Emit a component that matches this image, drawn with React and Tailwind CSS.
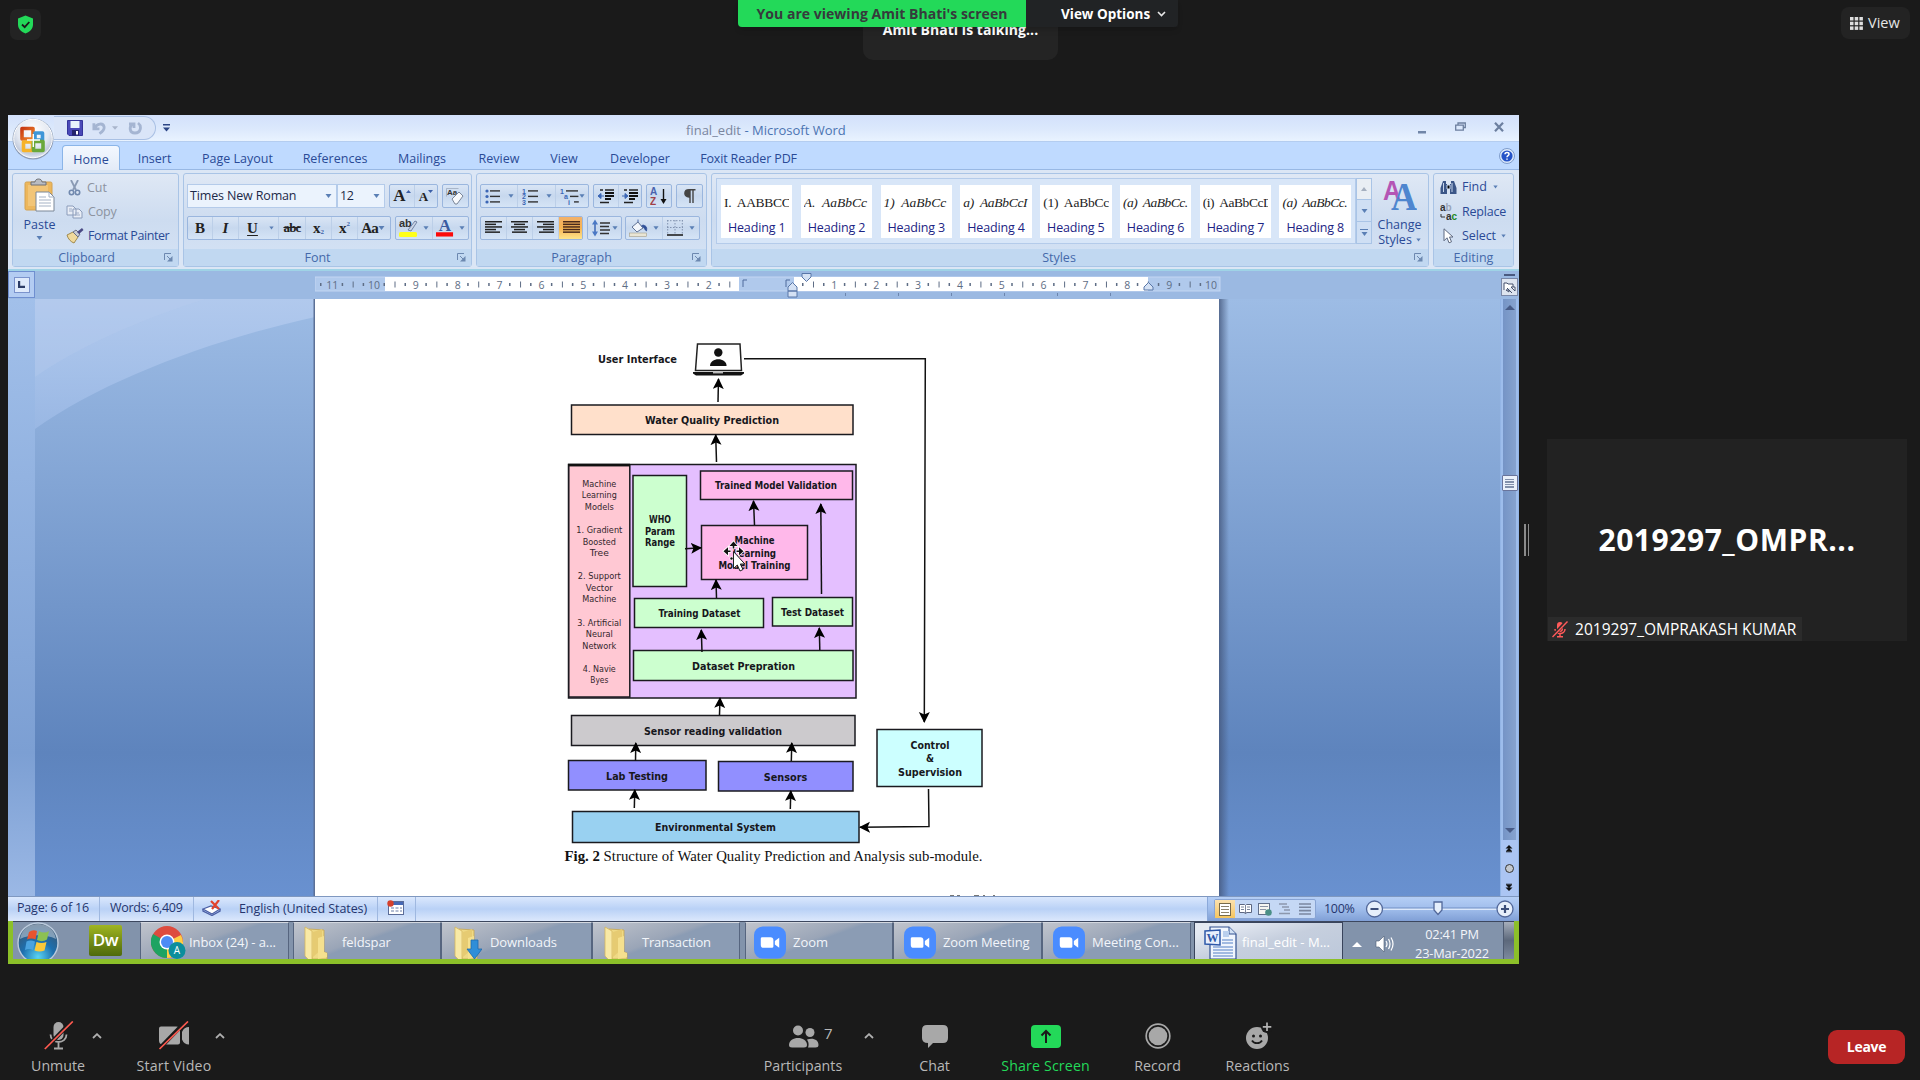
import React from "react";

const Caret = ({ className = "" }) => (
  <svg className={"shrink-0 " + className} width="7" height="4" viewBox="0 0 7 4"><path d="M.5 0h6L3.5 4z" fill="#5a7fb5" /></svg>
);

/* ---------- Window title bar ---------- */

function OfficeOrb() {
  return (
    <svg className="absolute left-[3px] top-[3px] z-10" width="44" height="44" viewBox="0 0 44 44">
      <defs>
        <radialGradient id="orb" cx=".5" cy=".3" r=".75">
          <stop offset="0" stopColor="#ffffff" /><stop offset=".55" stopColor="#e4e9f2" /><stop offset=".8" stopColor="#c3ccdd" /><stop offset="1" stopColor="#f4f8fd" />
        </radialGradient>
        <linearGradient id="tileR" x1="0" y1="0" x2="1" y2="1"><stop offset="0" stopColor="#c93a12" /><stop offset="1" stopColor="#f08a2c" /></linearGradient>
      </defs>
      <circle cx="22" cy="21" r="20.5" fill="#8b9ab3" />
      <circle cx="22" cy="20.500" r="19.300" fill="url(#orb)" stroke="#fff" strokeWidth="1" />
      <g fill="none" strokeWidth="3.600" strokeLinejoin="round">
        <rect x="11" y="10.500" width="11" height="10.500" stroke="url(#tileR)" />
        <rect x="24" y="15" width="7.500" height="7" stroke="#3f96d8" />
        <rect x="12.500" y="24" width="9" height="8.500" stroke="#f6b32a" />
        <rect x="22.500" y="23.500" width="9.500" height="9" stroke="#6aa83a" />
      </g>
      <path d="M16 22h13M22.300 16v13" stroke="#fff" strokeWidth="1.400" />
    </svg>
  );
}

function TitleBar() {
  return (
    <div className="flex h-[27px] shrink-0 items-center bg-linear-to-b from-[#d3e1fb] via-[#dbe8fc] to-[#e9f3ff] border-b border-[#b4cdf0]">
      <div className="ml-[46px] flex h-[24px] w-[102px] items-center rounded-r-full border border-l-0 border-[#a9c0e4] bg-[#dae5f8] pl-[13px]">
        <svg width="16" height="16" viewBox="0 0 16 16">
          <path d="M.5.500h15v15H2l-1.500-1.500z" fill="#4a49b8" stroke="#34349a" />
          <rect x="3.500" y="1" width="9" height="7" fill="#e8f2fb" /><rect x="5" y="10" width="7" height="5.500" fill="#23236c" /><rect x="9" y="11" width="2" height="3.500" fill="#fff" />
        </svg>
        <svg className="ml-[9px]" width="14" height="14" viewBox="0 0 15 14"><path d="M2 2v6h6M3 7c2-5 9-6 10-1 .3 3-2 5-5 7" fill="none" stroke="#a5b5d2" strokeWidth="3" /></svg>
        <svg className="ml-[6px]" width="6" height="4" viewBox="0 0 7 4"><path d="M0 0h7L3.500 4z" fill="#a9b5cb" /></svg>
        <svg className="ml-[10px]" width="14" height="14" viewBox="0 0 14 14"><path d="M1 3h5v4M5 3C1 5 1 12 7 12s7-7 3-10" fill="none" stroke="#a5b5d2" strokeWidth="2.800" /></svg>
      </div>
      <svg className="ml-[7px]" width="7" height="8" viewBox="0 0 7 8"><path d="M0 0h7v1.500H0zM0 3.500h7L3.500 7.500z" fill="#2b4585" /></svg>
      <div className="ml-[516px] mt-[3px] w-[180px] whitespace-nowrap text-[13px] leading-[18px] text-[#4c74b2]"><span className="text-[#7a869e]">final_edit</span> - Microsoft Word</div>
      <svg className="ml-[552px] mt-[8px]" width="8" height="3"><rect width="8" height="2.500" fill="#7186a8" /></svg>
      <svg className="ml-[29px] -mt-[3px]" width="11" height="9" viewBox="0 0 11 9"><path d="M3 3V1h7.300v4.500H8.500M.7 3.200h7.600v5H.7z" fill="none" stroke="#6c7f9f" strokeWidth="1.300" /></svg>
      <svg className="ml-[28px] -mt-[2px]" width="10" height="10" viewBox="0 0 10 10"><path d="M1 .8l8 8.400M9 .8L1 9.200" stroke="#6c7f9f" strokeWidth="2.200" /></svg>
    </div>
  );
}

function Tabs() {
  return (
    <div className="flex h-[28px] shrink-0 items-end border-b border-[#98b8e4] bg-[#bfdaff] text-[12.500px] leading-[21px] text-[#2a4a96]">
      <div className="relative top-px ml-[54px] h-[25px] w-[58px] rounded-t-[4px] border border-b-0 border-[#8bb5e8] bg-linear-to-b from-[#f3f8ff] to-[#e3ebf7] pt-px text-center leading-[25px]">Home</div>
      <div className="w-[54px] text-center pl-[15px] whitespace-nowrap">Insert</div>
      <div className="w-[127px] text-center whitespace-nowrap">Page Layout</div>
      <div className="w-[68px] text-center whitespace-nowrap">References</div>
      <div className="w-[106px] text-center whitespace-nowrap">Mailings</div>
      <div className="w-[48px] text-center whitespace-nowrap">Review</div>
      <div className="w-[82px] text-center whitespace-nowrap">View</div>
      <div className="w-[70px] text-center whitespace-nowrap">Developer</div>
      <div className="w-[147px] text-center whitespace-nowrap tracking-[-.15px]">Foxit Reader PDF</div>
      <svg className="ml-auto mr-[4px] mb-[5px]" width="16" height="16" viewBox="0 0 16 16">
        <circle cx="8" cy="8" r="7.500" fill="#dbe9fb" stroke="#7e9ccc" /><circle cx="8" cy="8" r="5.600" fill="#2554c8" />
        <path d="M6 6.300c0-2.400 4-2.300 4-.1 0 1.400-2 1.400-2 3M8 10.500v1.200" stroke="#fff" strokeWidth="1.500" fill="none" />
      </svg>
    </div>
  );
}

/* ---------- Ribbon ---------- */

function Group({ className, label, launcher = true, children }) {
  return (
    <div className={"flex h-[94px] shrink-0 flex-col rounded-[3px] border border-[#a9c4e6] bg-linear-to-b from-[#dfe8f5] via-[#cddcf0] to-[#d5e3f5] " + className}>
      <div className="h-[75px] shrink-0">{children}</div>
      <div className="relative flex h-[17px] items-center justify-center bg-[#c1d8f1] pt-px text-[12.500px] leading-[16px] text-[#4569aa]">
        {label}
        {launcher && (
          <svg className="absolute right-[5px] top-[4px]" width="9" height="9" viewBox="0 0 9 9"><path d="M.5 7V.5H7M3 3l3 3" fill="none" stroke="#6c88b0" /><path d="M8.500 3v5.500H3z" fill="#6c88b0" /></svg>
        )}
      </div>
    </div>
  );
}

const Box = ({ className = "", children }) => (
  <div className={"flex h-[24px] shrink-0 items-center rounded-[2px] border border-[#9ab6de] bg-linear-to-b from-[#d9e5f5] via-[#c7d8ee] to-[#d5e4f6] " + className}>{children}</div>
);
const Cell = ({ className = "", children }) => (
  <div className={"flex h-full shrink-0 items-center justify-center border-r border-[#bccfe8] last:border-r-0 " + className}>{children}</div>
);
const SERIF = "font-['Liberation_Serif',serif]";

function ClipboardGroup() {
  return (
    <Group className="w-[167px]" label={<span className="mr-[18px]">Clipboard</span>}>
      <div className="flex text-[12.500px] leading-[18px] text-[#2a4a96]">
        <div className="flex w-[53px] flex-col items-center pt-[4px]">
          <svg width="32" height="34" viewBox="0 0 32 34">
            <rect x="1" y="4" width="27" height="28" rx="1.500" fill="#edb75c" stroke="#d3a252" />
            <rect x="4" y="7" width="20" height="21" fill="#f2c577" />
            <path d="M7 7V4h4c0-4 7-4 7 0h4v3z" fill="#b9bcc2" stroke="#6e7176" />
            <path d="M12 14h13l5 5v14H12z" fill="#fff" stroke="#7b8798" />
            <path d="M25 14v5h5M15 19h7M15 22h12M15 25h12M15 28h12" fill="none" stroke="#a5b2c5" />
          </svg>
          <div className="mt-[4px] leading-[18px]">Paste</div>
          <Caret className="mt-[2px]" />
        </div>
        <div className="flex flex-col pt-px">
          <div className="flex h-[25px] items-center text-[#8c93a0]">
            <svg className="ml-[2px] mr-[6px]" width="13" height="16" viewBox="0 0 13 16"><path d="M3 0l5 10M10 0L5 10" stroke="#8a9ab4" strokeWidth="1.800" /><circle cx="3.500" cy="12.500" r="2.200" fill="none" stroke="#7088ae" strokeWidth="1.600" /><circle cx="9.500" cy="12.500" r="2.200" fill="none" stroke="#7088ae" strokeWidth="1.600" /></svg>Cut
          </div>
          <div className="flex h-[24px] items-center tracking-[-.2px] text-[#8c93a0]">
            <svg className="mr-[5px]" width="17" height="14" viewBox="0 0 17 14"><path d="M1 1h6l3 3v6H1zM7 4h6l3 3v6H7z" fill="#e8edf6" stroke="#8b9cba" /><path d="M3 4h3M3 6h4M9 8h4M9 10h5" stroke="#9eacc6" /></svg>Copy
          </div>
          <div className="flex h-[24px] items-center whitespace-nowrap tracking-[-.42px]">
            <svg className="mr-[4px]" width="18" height="16" viewBox="0 0 18 16"><path d="M1 7l6-3 5 5-4 6c-3-1-6-4-7-8z" fill="#f0d99c" stroke="#a08a4e" /><path d="M7 4l3-2 4 4-2 3z" fill="#c7cbd4" stroke="#6b6f84" /><path d="M11 4l5-4 1.500 2L13 6z" fill="#4a4a84" /></svg>Format Painter
          </div>
        </div>
      </div>
    </Group>
  );
}

function FontGroup() {
  return (
    <Group className="w-[289px]" label={<span className="mr-[20px]">Font</span>}>
      <div className="flex flex-col gap-[8px] pl-[3px] pt-[10px]">
        <div className="flex h-[24px]">
          <div className="flex h-[24px] w-[150px] items-center justify-between border border-[#b4cbea] bg-[#ebf3fd] pl-[2px] pr-[4px] text-[12.500px] leading-[18px] tracking-[-.15px] text-[#1c2a48]">Times New Roman<Caret /></div>
          <div className="flex h-[24px] w-[48px] items-center justify-between border border-[#b4cbea] bg-[#ebf3fd] pl-[2px] pr-[4px] text-[12.500px] leading-[18px] tracking-[-.3px] text-[#1c2a48]">12<Caret /></div>
          <Box className="ml-[4px] w-[49px]">
            <Cell className={"w-[25px] text-[17px] font-bold text-[#222] " + SERIF}>A<svg className="mb-[10px]" width="5" height="3"><path d="M0 3h5L2.500 0z" fill="#3b5fa8" /></svg></Cell>
            <Cell className={"w-[22px] pt-[2px] text-[13px] font-bold text-[#222] " + SERIF}>A<svg className="mb-[12px]" width="5" height="3"><path d="M0 0h5L2.500 3z" fill="#3b5fa8" /></svg></Cell>
          </Box>
          <Box className="ml-[4px] w-[27px] justify-center">
            <svg width="19" height="19" viewBox="0 0 19 19"><text x="1" y="8" fontSize="8" fontWeight="bold" fontFamily="Liberation Sans" fill="#333">Aa</text><path d="M.5 9.500V1.500h12" fill="none" stroke="#8b98ad" strokeWidth=".6" /><path d="M6 12l7-7 4 4-6 8H9z" fill="#f7f9fc" stroke="#7b8698" /></svg>
          </Box>
        </div>
        <div className="flex h-[24px]">
          <Box className={"w-[204px] text-[15px] text-[#222] " + SERIF}>
            <Cell className="w-[25px] font-bold">B</Cell>
            <Cell className="w-[26px] font-bold italic">I</Cell>
            <Cell className="w-[40px] gap-[11px] pl-[4px] font-bold"><span className="underline underline-offset-2">U</span><Caret className="w-[5px]" /></Cell>
            <Cell className="w-[27px] text-[13px] font-bold line-through tracking-[-.8px]">abc</Cell>
            <Cell className="w-[26px] font-bold">x<span className="mt-[8px] text-[7px] text-[#3b5fa8]">2</span></Cell>
            <Cell className="w-[26px] font-bold">x<span className="mb-[8px] text-[7px] text-[#3b5fa8]">2</span></Cell>
            <Cell className="w-[30px] font-bold tracking-[-.8px]">Aa<Caret /></Cell>
          </Box>
          <Box className="ml-[4px] w-[74px]">
            <Cell className="w-[37px] gap-[5px]">
              <svg width="19" height="20" viewBox="0 0 19 20"><text x="0" y="9" fontSize="11" fontFamily="Liberation Sans" fontWeight="bold" fill="#333">ab</text><path d="M9 12l7-9 2 1-6 9z" fill="#cbd5e6" stroke="#5c6e93" strokeWidth=".8" /><rect x="0" y="14" width="18" height="5" rx="1.500" fill="#ffff1a" /></svg>
              <Caret className="w-[6px]" />
            </Cell>
            <Cell className="w-[35px] gap-[5px]">
              <svg width="18" height="20" viewBox="0 0 19 20"><text x="3" y="13" fontSize="18" fontFamily="Liberation Serif" fontWeight="bold" fill="#3a5ba0">A</text><rect x="0" y="14.500" width="18" height="4.500" fill="#fb0a0a" /></svg>
              <Caret className="w-[6px]" />
            </Cell>
          </Box>
        </div>
      </div>
    </Group>
  );
}

const Lines = ({ rows, w = 17, h = 14, stroke = "#222" }) => (
  <svg width={w} height={h} viewBox={`0 0 ${w} ${h}`}>{rows.map(([x, l], i) => <rect key={i} x={x} y={i * 2.600} width={l} height="1.500" fill={stroke} />)}</svg>
);

function ListIcon({ kind }) {
  const marks = kind === "num" ? ["1", "2", "3"] : ["1", "a", "i"];
  const off = kind === "multi" ? [0, 4, 8] : [0, 0, 0];
  return (
    <svg width="19" height="17" viewBox="0 0 19 17">
      {[0, 1, 2].map((i) => (
        <g key={i}>
          {kind === "dot" ? <circle cx="3" cy={3 + i * 5.500} r="1.600" fill="#3b66b5" /> : <text x={off[i]} y={5.500 + i * 5.500} fontSize="7" fontWeight="bold" fontFamily="Liberation Sans" fill="#3b66b5">{marks[i]}</text>}
          <rect x={6 + off[i]} y={2.200 + i * 5.500} width={kind === "multi" ? 12 - off[i] * 0.900 : 10} height="1.400" fill="#333" />
        </g>
      ))}
    </svg>
  );
}

function IndentIcon({ flip }) {
  return (
    <svg width="18" height="15" viewBox="0 0 18 15">
      <path d="M3 1h3M3 13.500h5M8 1h9M8 13.500h4" stroke="#222" strokeWidth="1.400" />
      <path d="M8 4h9M8 7h9M8 10h6" stroke="#111" strokeWidth="2" />
      {flip ? <path d="M1 7h4M4 4.500L7 7 4 9.500z" fill="#3b66b5" stroke="#3b66b5" /> : <path d="M7 7H3M4 4.500L1 7l3 2.500z" fill="#3b66b5" stroke="#3b66b5" />}
    </svg>
  );
}

function ParagraphGroup() {
  return (
    <Group className="w-[231px]" label={<span className="mr-[20px]">Paragraph</span>}>
      <div className="flex flex-col gap-[8px] pl-[3px] pt-[10px]">
        <div className="flex h-[24px]">
          <Box className="w-[109px]">
            <Cell className="w-[37px] gap-[5px]"><ListIcon kind="dot" /><Caret className="w-[6px]" /></Cell>
            <Cell className="w-[38px] gap-[5px]"><ListIcon kind="num" /><Caret className="w-[6px]" /></Cell>
            <Cell className="w-[32px] gap-0"><ListIcon kind="multi" /><Caret className="w-[6px]" /></Cell>
          </Box>
          <Box className="ml-[4px] w-[49px]"><Cell className="w-[25px]"><IndentIcon /></Cell><Cell className="w-[22px]"><IndentIcon flip /></Cell></Box>
          <Box className="ml-[4px] w-[26px] justify-center">
            <svg width="18" height="19" viewBox="0 0 18 19"><text x="0" y="8" fontSize="10" fontWeight="bold" fontFamily="Liberation Sans" fill="#4a63ae">A</text><text x="0" y="18" fontSize="10" fontWeight="bold" fontFamily="Liberation Sans" fill="#a04048">Z</text><path d="M13.500 2v13" stroke="#111" strokeWidth="1.400" /><path d="M10.500 12h6l-3 5z" fill="#111" /></svg>
          </Box>
          <Box className="ml-[4px] w-[27px] justify-center">
            <svg width="12" height="15" viewBox="0 0 12 15"><path d="M11.500.700H5C-.5.700-.5 8 5 8V.700M6 1v13M9 1v13" stroke="#444" strokeWidth="1.400" fill="#444" /></svg>
          </Box>
        </div>
        <div className="flex h-[24px]">
          <Box className="w-[103px] overflow-hidden">
            <Cell className="w-[26px]"><Lines rows={[[0, 17], [0, 11], [0, 17], [0, 11], [0, 15]]} /></Cell>
            <Cell className="w-[26px]"><Lines rows={[[0, 17], [3, 11], [0, 17], [3, 11], [1, 15]]} /></Cell>
            <Cell className="w-[26px]"><Lines rows={[[0, 17], [6, 11], [0, 17], [6, 11], [2, 15]]} /></Cell>
            <Cell className="w-[24px] bg-linear-to-b from-[#f2b069] via-[#f7b451] to-[#fde58c]"><Lines rows={[[0, 17], [0, 17], [0, 17], [0, 17], [0, 17]]} stroke="#4a2a1c" /></Cell>
          </Box>
          <Box className="ml-[4px] w-[35px] justify-center gap-[2px]">
            <svg width="18" height="18" viewBox="0 0 18 18"><path d="M3 4v10" stroke="#3b66b5" strokeWidth="1.500" /><path d="M0 5.500L3 .500l3 5zM0 12.500l3 5 3-5z" fill="#4a78c5" /><path d="M8 4h10M8 7.500h9M8 11h10M8 14.500h9" stroke="#333" strokeWidth="1.400" /></svg>
            <Caret className="w-[6px]" />
          </Box>
          <Box className="ml-[3px] w-[75px]">
            <Cell className="w-[37px] gap-[5px]">
              <svg width="19" height="18" viewBox="0 0 19 18"><path d="M3 8l6-5 5 6-6 4z" fill="#f3f6fb" stroke="#5f7193" /><path d="M9 3V.500M14 6c4 1 4 3 3.500 6-2-1-2-4-5-5z" fill="#2f4f98" stroke="#2f4f98" strokeWidth=".8" /><rect x=".5" y="14" width="17" height="3.500" fill="#e9e5d5" stroke="#a49d88" strokeWidth=".6" /></svg>
              <Caret className="w-[6px]" />
            </Cell>
            <Cell className="w-[36px] gap-[6px]">
              <svg width="16" height="16" viewBox="0 0 16 16"><path d="M.7 0v14M8 0v14M15.300 0v14M0 .700h16M0 7.500h16" stroke="#8293b0" strokeDasharray="1.500 1.500" fill="none" /><path d="M0 15h16" stroke="#222" strokeWidth="1.600" /></svg>
              <Caret className="w-[6px]" />
            </Cell>
          </Box>
        </div>
      </div>
    </Group>
  );
}

const HEADINGS = [
  ["I.  AABBCC", "tracking-[-.3px]"], ["A.  AaBbCc", "italic"], ["1)  AaBbCc", "italic"], ["a)  AaBbCcI", "italic tracking-[-.3px]"],
  ["(1)  AaBbCc", "tracking-[-.2px]"], ["(a)  AaBbCc.", "italic tracking-[-.5px]"], ["(i)  AaBbCcD", "tracking-[-.45px]"], ["(a)  AaBbCc.", "italic tracking-[-.5px]"],
];

function StylesGroup() {
  return (
    <Group className="w-[718px]" label={<span className="mr-[22px]">Styles</span>}>
      <div className="flex pl-[4px] pt-[4px]">
        <div className="flex h-[66px] w-[640px] items-center gap-[8.400px] border border-[#b4cbea] bg-[#d8e6f8] pl-[4px]">
          {HEADINGS.map(([sample, cls], i) => (
            <div key={i} className="flex h-[53px] w-[71.400px] shrink-0 flex-col bg-white">
              <div className={"ml-[3px] mr-[3px] mt-[7px] h-[20px] overflow-hidden whitespace-pre text-[13.500px] leading-[21px] text-[#222] " + SERIF + " " + cls}>{sample}</div>
              <div className="mt-[7px] whitespace-nowrap text-center text-[12.500px] leading-[18px] tracking-[-.15px] text-[#1c2484]">Heading {i + 1}</div>
            </div>
          ))}
        </div>
        <div className="flex h-[66px] w-[16px] flex-col border border-[#a9c4e6]">
          <div className="flex h-[22px] items-center justify-center border-b border-[#a9c4e6] bg-[#e9eef4]"><svg width="7" height="4"><path d="M0 4h6L3 0z" fill="#a5afbf" /></svg></div>
          <div className="flex h-[22px] items-center justify-center border-b border-[#a9c4e6] bg-[#cfdff4]"><Caret /></div>
          <div className="flex h-[22px] flex-col items-center justify-center gap-[2px] bg-[#cfdff4]"><div className="h-px w-[8px] bg-[#5a7fb5]" /><Caret /></div>
        </div>
        <div className="flex w-[55px] flex-col items-center text-[12.500px] leading-[14.500px] text-[#2a4a96]">
          <svg className="mt-[1px]" width="34" height="32" viewBox="0 0 34 32">
            <text x="0" y="21" fontSize="28" fontWeight="bold" fontFamily="Liberation Sans" fill="#b455b5" textLength="18" lengthAdjust="spacingAndGlyphs">A</text>
            <text x="8" y="31" fontSize="40" fontWeight="bold" fontFamily="Liberation Serif" fill="#4f86cf" textLength="26" lengthAdjust="spacingAndGlyphs">A</text>
          </svg>
          <div className="mt-[7px]">Change</div>
          <div className="flex items-center gap-[4px]">Styles<Caret className="w-[5px]" /></div>
        </div>
      </div>
    </Group>
  );
}

function EditingGroup() {
  return (
    <Group className="w-[81px]" label="Editing" launcher={false}>
      <div className="flex flex-col pl-[6px] pt-px text-[12.500px] leading-[18px] text-[#2a4a96]">
        <div className="flex h-[24px] items-center">
          <svg className="mr-[5px]" width="17" height="15" viewBox="0 0 17 15"><path d="M3 1h3v3h1v10H.500V8zM14 1h-3v3h-1v10h6.500V8z" fill="#3b5688" /><path d="M7 5h3v4H7zM3.500 3v9M12 3v9" stroke="#c6d5ec" /></svg>Find<Caret className="ml-[6px] w-[5px]" />
        </div>
        <div className="flex h-[25px] items-center tracking-[-.2px]">
          <svg className="mr-[4px]" width="18" height="18" viewBox="0 0 18 18"><text x="0" y="8" fontSize="10" fontWeight="bold" fontFamily="Liberation Sans" fill="#333">a<tspan fill="#9aa5b8">b</tspan></text><path d="M1 11v3h4" fill="none" stroke="#333" /><text x="6" y="17" fontSize="10" fontWeight="bold" fontFamily="Liberation Sans" fill="#333">a<tspan fill="#258a25">c</tspan></text></svg>Replace
        </div>
        <div className="flex h-[24px] items-center tracking-[-.1px]">
          <svg className="ml-[3px] mr-[8px]" width="11" height="16" viewBox="0 0 11 16"><path d="M1 .800v12l3-3 2 5 2.500-1-2-4.800H10z" fill="#fff" stroke="#5d6980" /></svg>Select<Caret className="ml-[5px] w-[5px]" />
        </div>
      </div>
    </Group>
  );
}

function Ribbon() {
  return (
    <div className="flex h-[101px] shrink-0 gap-[4px] border-b-[2px] border-[#9fd3e6] bg-[#dbe6f5] pl-[4px] pt-[3px]">
      <ClipboardGroup /><FontGroup /><ParagraphGroup /><StylesGroup /><EditingGroup />
    </div>
  );
}

/* ---------- Ruler and document ---------- */

function Ruler() {
  const marks = [];
  for (let i = -11; i <= 10; i++) {
    const x = 477.5 + i * 41.850;
    if (i !== 0 && i !== -1) marks.push(<text key={"n" + i} x={x} y="11.800" fontSize="10.500" textAnchor="middle">{Math.abs(i)}</text>);
    if (i < 10 && i !== -1) {
      if (i !== -2) marks.push(<rect key={"e" + i} x={x + 30.500} y="6" width="1.500" height="3" />);
      marks.push(<rect key={"d" + i} x={x + 9.500} y="6" width="1.500" height="3" />);
      marks.push(<rect key={"b" + i} x={x + 20.500} y="4.500" width="1" height="6" />);
    }
  }
  return (
    <div className="flex h-[28px] shrink-0 bg-[#9bb9e2]">
      <div className="flex h-[27px] w-[27px] items-center justify-center border border-[#6f8fd0] bg-[#b3ccf2]">
        <div className="flex h-[16px] w-[16px] items-center justify-center border border-[#7b93cc] bg-[#dfeafb]"><svg width="7" height="7"><path d="M1 0v6h6" fill="none" stroke="#2c3c66" strokeWidth="2.400" /></svg></div>
      </div>
      <svg className="ml-[280px]" width="906" height="28" viewBox="0 -6 906 28">
        <rect x="0" y="0" width="905" height="14" fill="#b0c9ec" stroke="#c3d6f2" />
        <rect x="70" y="0" width="354" height="14" fill="#fff" /><rect x="479" y="0" width="354" height="14" fill="#fff" />
        <rect x="5" y="6" width="1.500" height="3" fill="#5e6d85" />
        <g fill="#5e6d85" fontFamily="Open Sans, sans-serif">{marks}</g>
        <path d="M428 10V3h4M471 10V3h4" fill="none" stroke="#4f6a9c" />
        <g fill="#d4e1f4" stroke="#5876a8"><path d="M473 14v-4l4.500-4.500L482 10v4zM473 14h9v6h-9zM829 13v-3l4.500-4.500L838 10v3zM487-3.500h9V0l-4.500 4.500L487 0z" /></g>
        <g fill="#6d86ae">{[530, 583, 636, 689, 742, 795].map((x) => <rect key={x} x={x} y="16" width="1" height="3" />)}</g>
      </svg>
      <div className="ml-auto flex w-[18px] flex-col items-center pr-px">
        <div className="mt-[3px] h-[2px] w-[11px] bg-[#4a5a80]" />
        <div className="mt-[2px] flex h-[18px] w-[17px] items-center justify-center border border-[#7a88a8] bg-[#dde4ef]"><svg width="13" height="13" viewBox="0 0 13 13"><path d="M1 9V2h3l1 1h5v3M4 7l5 5M8 6l4 4v-4zM3 9h3v2z" fill="#fff" stroke="#44506c" /></svg></div>
      </div>
    </div>
  );
}

const NODES = [
  [571.5, 405, 281.5, 29.5, "#ffe0cb"], [568.5, 464.5, 287.5, 233.5, "#e4bfff"], [568.8, 465.5, 61, 231.5, "#ffc8d3"],
  [633, 475.5, 53.5, 111, "#ccffcf"], [700.5, 471, 152, 28.5, "#ffb8ea"], [701.5, 525.5, 106, 54, "#ffb8ea"],
  [634.5, 598.5, 129, 29, "#ccffcf"], [772.5, 597.5, 80, 28.5, "#ccffcf"], [633.5, 650.5, 219.5, 30, "#ccffcf"],
  [571.5, 715.5, 283.5, 30, "#cccacd"], [568.5, 760.5, 137.5, 29.5, "#918fff"], [718.5, 761.5, 134.5, 29.5, "#918fff"],
  [572.5, 811.5, 286.5, 31, "#99d1f1"], [877, 729.5, 105, 57, "#ccffff"],
];
const LABELS = [
  ["User Interface", 637.5, 359, 79, 11.300], ["Water Quality Prediction", 712, 420, 134, 11.300], ["Trained Model Validation", 776, 485.200, 122, 11],
  ["WHO", 660, 519.700, 22, 10], ["Param", 660, 531.200, 30, 10.500], ["Range", 660, 542.700, 30, 10.500],
  ["Machine", 754.500, 540.200, 40, 10.800], ["Learning", 754.500, 552.700, 43, 10.800], ["Model Training", 754.500, 565.500, 72, 10.800],
  ["Training Dataset", 699.500, 613, 82, 11], ["Test Dataset", 812.500, 611.700, 63, 10.800], ["Dataset Prepration", 743.500, 666, 103, 11],
  ["Sensor reading validation", 713, 731, 138, 11.300], ["Lab Testing", 637, 775.700, 62, 11.300], ["Sensors", 785.500, 776.500, 43.500, 11.300],
  ["Environmental System", 715.500, 827.200, 121, 11.300], ["Control", 930, 744.500, 39, 11.300], ["&", 930, 758.500, 8, 10.500], ["Supervision", 930, 772.300, 64, 11.300],
];
const MODELS = [
  ["Machine", 34, 0], ["Learning", 35, 1], ["Models", 29, 2], ["1. Gradient", 46, 4], ["Boosted", 33, 5], ["Tree", 19, 6],
  ["2. Support", 43, 8], ["Vector", 27, 9], ["Machine", 34, 10], ["3. Artificial", 44, 12], ["Neural", 27, 13], ["Network", 34, 14], ["4. Navie", 33, 16], ["Byes", 18, 17],
];
const ARROWS = [
  [718, 402, 718.500, 379], [716.500, 462, 715.700, 435], [754.500, 525, 753.500, 501], [821.500, 594, 820.800, 504], [716.500, 598, 716, 580],
  [702, 652, 701.300, 630], [819.800, 650, 819.300, 628], [719.500, 715, 720, 698], [635.500, 761, 635.800, 743], [791.300, 761, 791.800, 743],
  [634.300, 808, 634.800, 790], [790.300, 809, 790.800, 791], [685, 548.700, 701, 547.700],
];

function Diagram() {
  return (
    <svg className="block" width="904" height="597" viewBox="315 299 904 597">
      <defs>
        <marker id="tip" markerUnits="userSpaceOnUse" markerWidth="12" markerHeight="12" refX="10" refY="5.500" orient="auto"><path d="M0 0l11 5.500L0 11l2.500-5.500z" fill="#000" /></marker>
      </defs>
      {NODES.map(([x, y, w, h, f], i) => <rect key={i} x={x} y={y} width={w} height={h} fill={f} stroke="#1a1a1f" strokeWidth="1.500" />)}
      <path d="M568 465h62" stroke="#111" strokeWidth="2.500" />
      <g stroke="#111" strokeWidth="1.500" fill="none">
        {ARROWS.map(([a, b, c, d], i) => <path key={i} d={`M${a} ${b}L${c} ${d}`} markerEnd="url(#tip)" />)}
        <path d="M744 358.800H925.300L924.300 722" markerEnd="url(#tip)" />
        <path d="M928.500 789L929 826.500L860 827.300" markerEnd="url(#tip)" />
      </g>
      <path d="M697.500 344h42.500l1.500 26.500h-46z" fill="#fff" stroke="#222" strokeWidth="1.500" />
      <path d="M693 372h51v1.500l-3 2h-45l-3-2z" fill="#111" /><path d="M713 372.800h10" stroke="#fff" />
      <circle cx="718.300" cy="352.500" r="4.200" fill="#111" /><path d="M710 366c0-9 16.600-9 16.600 0z" fill="#111" />
      <g fontFamily="DejaVu Sans, sans-serif" textAnchor="middle">
        <g fontWeight="bold" fill="#17171c">{LABELS.map(([t, x, y, w, s]) => <text key={t + y} x={x} y={y + s * 0.360} fontSize={s} textLength={w} lengthAdjust="spacingAndGlyphs">{t}</text>)}</g>
        <g fill="#33262c">{MODELS.map(([t, w, r]) => <text key={r} x="599.300" y={486.800 + r * 11.560} fontSize="9.200" textLength={w} lengthAdjust="spacingAndGlyphs">{t}</text>)}</g>
      </g>
      <text x="564.500" y="861" fontSize="15.500" fontFamily="Liberation Serif, serif" textLength="418" lengthAdjust="spacingAndGlyphs" fill="#111"><tspan fontWeight="bold">Fig. 2</tspan> Structure of Water Quality Prediction and Analysis sub-module.</text>
      <path d="M950 895.500h4M957 895.500h3M974 895.500h5M983 895.500h2M993 895.500h2" stroke="#777" />
      <g fill="#111" stroke="#fff" strokeWidth="1.600" paintOrder="stroke">
        <path d="M733.500 541.500l4 4.500h-3.200v2.500h-1.600V546h-3.200zM723.500 551.200l4.500-4v3.200h2.500v1.600H728v3.200zM743.500 551.200l-4.500-4v3.200h-2.500v1.600h2.500v3.200z" /><circle cx="731.500" cy="558.500" r="1.200" />
      </g>
      <path d="M733.500 551.500v17l3.800-3.500 2.700 6 3-1.500-2.700-5.500h4.500z" fill="#fff" stroke="#222" />
    </svg>
  );
}

function DocumentArea() {
  return (
    <div className="flex h-[597px] shrink-0 bg-linear-to-b from-[#9dbce5] via-[#5e84bd] via-76% to-[#6991d0]">
      <div className="w-[27px] bg-linear-to-b from-[#a2c0ea] via-[#7c9fd3] via-76% to-[#9bb8e5]" />
      <svg className="block" width="280" height="597" viewBox="0 0 280 597">
        <defs>
          <linearGradient id="fanA" x1="0" y1="0" x2="0" y2="1"><stop offset="0" stopColor="#b1c9ed" /><stop offset="1" stopColor="#a3bfea" stopOpacity=".6" /></linearGradient>
        </defs>
        <path d="M0 0H280V18C180 40 70 80 0 130z" fill="url(#fanA)" /><path d="M0 0H170C100 22 40 50 0 78z" fill="#b8ccee" opacity=".3" />
        <rect x="278.500" width="1.500" height="597" fill="#5c7096" />
      </svg>
      <div className="w-[904px] bg-white"><Diagram /></div>
      <div className="w-[10px] bg-linear-to-r from-[#44577c] to-[#44577c]/0 opacity-80" />
      <div className="ml-auto flex w-[19px] flex-col border-l border-r border-[#93b5e6]">
        <div className="flex h-[541px] flex-col items-center border-x-[2px] border-[#9dbdec] bg-linear-to-r from-[#7594c6] to-[#86a3cf]">
          <svg className="mt-[6px] shrink-0" width="10" height="5"><path d="M0 5h10L5 0z" fill="#485c88" /></svg>
          <div className="mt-[165px] flex h-[16px] w-[16px] shrink-0 flex-col items-center justify-center gap-[1px] rounded-[1px] border border-[#69749c] bg-[#eaf0fa]">
            {[0, 1, 2, 3].map((i) => <div key={i} className="h-[1.500px] w-[9px] bg-[#8290ab]" />)}
          </div>
          <svg className="mb-[7px] mt-auto shrink-0" width="10" height="5"><path d="M0 0h10L5 5z" fill="#485c88" /></svg>
        </div>
        <div className="flex h-[56px] flex-col items-center justify-between bg-[#abc5f3] py-[5px] pr-px">
          <svg width="8" height="8"><path d="M4 0l3.500 3.500h-7zM4 3L7 6H1zM1 6.300h6v1H1z" fill="#111" /></svg>
          <div className="h-[9px] w-[9px] rounded-full border-[1.500px] border-[#333] bg-[#c3c8cf]" />
          <svg width="8" height="8"><path d="M4 8L.5 4.500h7zM4 5L1 2h6zM1 .7h6v1H1z" fill="#111" /></svg>
        </div>
      </div>
    </div>
  );
}

/* ---------- Status bar ---------- */

function StatusBar() {
  return (
    <div className="flex h-[25px] shrink-0 items-center border-t border-[#7f98c0] bg-linear-to-b from-[#dbe8fd] via-[#b9d1f6] to-[#dce8fc] text-[12.500px] leading-[22px] text-[#25356d]">
      <div className="h-full w-[92px] border-r border-[#9fb8e0] pl-[9px] whitespace-nowrap tracking-[-.2px]">Page: 6 of 16</div>
      <div className="h-full w-[94px] border-r border-[#9fb8e0] pl-[10px] whitespace-nowrap tracking-[-.3px]">Words: 6,409</div>
      <div className="flex h-full w-[184px] items-center border-r border-[#9fb8e0] pl-[8px] whitespace-nowrap tracking-[-.08px]">
        <svg className="-mt-[2px] mr-[18px]" width="19" height="16" viewBox="0 0 19 16"><path d="M1 9l8-3 9 3-8 5z" fill="#fff" stroke="#4b5fa5" strokeWidth="1.200" /><path d="M1 9v2l9 4.500 8-4.500V9" fill="none" stroke="#4b5fa5" strokeWidth="1.300" /><path d="M9 1l8 8M17 0L10 9" stroke="#e2422c" strokeWidth="2.200" /></svg>English (United States)
      </div>
      <div className="flex h-full w-[38px] items-center border-r border-[#9fb8e0] pl-[9px]">
        <svg className="-mt-[3px]" width="17" height="15" viewBox="0 0 17 15"><rect x="1.500" y="1.500" width="15" height="13" fill="#fff" stroke="#5b6c98" /><rect x="2" y="2" width="14" height="3" fill="#4568b5" /><path d="M4 8h3M8.500 8h3M13 8h2M4 11h3M8.500 11h3M13 11h2" stroke="#9aa8c5" strokeWidth="1.500" /><circle cx="3.500" cy="3.500" r="3.200" fill="#d5402c" /></svg>
      </div>
      <div className="ml-auto flex h-full w-[312px] items-center border-l border-[#8ba9da] bg-linear-to-b from-[#b5cff6] via-[#a0bdeb] to-[#809fd6]">
        <div className="ml-[6px] flex h-[20px] w-[102px] rounded-[2px] border border-[#88a4d4] bg-[#c5d8f5]">
          <div className="flex w-[20px] items-center justify-center bg-linear-to-b from-[#fbe1ad] to-[#f5c55d]"><svg width="12" height="13"><rect x=".5" y=".5" width="11" height="12" fill="#fff" stroke="#766a4c" /><path d="M2 3.500h8M2 6.500h8M2 9.500h8" stroke="#8b826c" /></svg></div>
          <div className="flex w-[20px] items-center justify-center"><svg width="13" height="12" viewBox="0 0 13 12"><path d="M.5 1.500h5l1 1 1-1h5v8h-5l-1 1.500-1-1.500h-5z" fill="#fff" stroke="#5c6680" /><path d="M6.500 2v8M2 4h3M2 6.500h3M8 4h3M8 6.500h3" stroke="#7c869c" /></svg></div>
          <div className="flex w-[20px] items-center justify-center"><svg width="14" height="13"><rect x=".5" y=".5" width="11" height="11" fill="#f6f6f2" stroke="#62708c" /><path d="M2 3.500h8M2 6.500h6" stroke="#8b94a6" /><circle cx="10.500" cy="9.500" r="3.300" fill="#4a8f86" /></svg></div>
          <div className="flex w-[20px] items-center justify-center"><svg width="12" height="12"><path d="M0 1h8M3 4h7M5 7h6M0 10.500h11" stroke="#8c97ad" strokeWidth="1.300" /></svg></div>
          <div className="flex w-[20px] items-center justify-center"><svg width="12" height="12"><path d="M0 1h12M0 4.300h12M0 7.600h12M0 11h12" stroke="#7b87a0" strokeWidth="1.600" /></svg></div>
        </div>
        <div className="ml-[8px] w-[35px] tracking-[-.3px]">100%</div>
        <svg className="ml-[6px]" width="151" height="20" viewBox="0 0 151 20">
          <path d="M18 10h115" stroke="#dce8fb" strokeWidth="2" /><path d="M18 9h115" stroke="#708fc5" />
          <g fill="#e6effb" stroke="#52689a" strokeWidth="1.300"><circle cx="9.500" cy="10" r="8" /><circle cx="140" cy="10" r="8" /><path d="M69 3h8v8l-4 4.500-4-4.500z" /></g>
          <path d="M5.500 10h8M136 10h8M140 6v8" stroke="#3c4f7a" strokeWidth="2.200" />
        </svg>
      </div>
    </div>
  );
}

/* ---------- Windows taskbar ---------- */

const Folder = ({ down }) => (
  <svg className="shrink-0" width="28" height="34" viewBox="0 0 28 34">
    <path d="M5 3l15 1v22l3 1v6H8z" fill="#efd985" stroke="#c7a651" strokeWidth=".8" /><path d="M9 6l9-3v20l-9 8z" fill="#e6cb72" />
    <path d="M1 1l7 4v29H5L1 30z" fill="#f8e9a6" stroke="#d5b65e" strokeWidth=".8" /><path d="M14 12l6-2v16l3 1v4l-9 2z" fill="#f5e08e" />
    {down && <path d="M17 14h7v9h4l-7.500 10-7.500-10h4z" fill="#2f8ed8" stroke="#1c6bb0" strokeWidth=".8" />}
  </svg>
);
const ZoomLogo = () => (
  <svg className="shrink-0" width="32" height="33" viewBox="0 0 33 33"><rect width="33" height="33" rx="9" fill="#4a8cff" /><path d="M7 12.500q0-1.500 1.500-1.500H17q3 0 3 3v6.500q0 1.500-1.500 1.500H10q-3 0-3-3zM21.500 15l4.500-3.500v10.500l-4.500-3.500z" fill="#fff" /></svg>
);
const Chrome = () => (
  <svg className="shrink-0" width="36" height="33" viewBox="0 0 36 33">
    <circle cx="16" cy="16" r="16" fill="#dd4b3e" /><path d="M16 16L2.100 8A16 16 0 0 0 16 32z" fill="#1ea362" /><path d="M16 16h16a16 16 0 0 1-16 16z" fill="#ffce44" /><path d="M16 16l14-7a16 16 0 0 1-6 21z" fill="#ffce44" />
    <circle cx="16" cy="16" r="7.500" fill="#fff" /><circle cx="16" cy="16" r="6" fill="#4c8bf5" /><circle cx="26" cy="24.500" r="8.500" fill="#0b8e9c" />
    <text x="26" y="28" fontSize="10" textAnchor="middle" fill="#fff" fontFamily="Open Sans">A</text>
  </svg>
);
const WordDoc = () => (
  <svg className="shrink-0" width="33" height="33" viewBox="0 0 33 33">
    <path d="M6 1h19l7 7v25H6z" fill="#f0f5fd" stroke="#31508f" strokeWidth="1.200" /><path d="M25 1v7h7" fill="#d3e2f5" stroke="#31508f" />
    <path d="M18 14h11M18 17h11M9 21h20M9 24h20M9 27h20M9 30h20" stroke="#86a7d8" strokeWidth="1.300" /><rect x="19" y="5" width="6" height="6" fill="#b9cfee" />
    <path d="M1 5l15-1v15L1 18z" fill="#e7effc" stroke="#2d57a8" strokeWidth="1.500" /><text x="8.500" y="15.500" fontSize="12" fontWeight="bold" textAnchor="middle" fontFamily="Liberation Serif" fill="#2d57a8">W</text>
  </svg>
);

const TASKS = [
  ["w-[149px] ml-[18px] pl-[10px]", <Chrome key="i" />, "Inbox (24) - a...", "ml-[2px] tracking-[-.1px]"],
  ["w-[148px] ml-[4px] pl-[10px]", <Folder key="i" />, "feldspar", "ml-[10px] tracking-[-.1px]"],
  ["w-[151px] pl-[12px]", <Folder down key="i" />, "Downloads", "ml-[8px] tracking-[-.1px]"],
  ["w-[148px] pl-[11px]", <Folder key="i" />, "Transaction", "ml-[10px] tracking-[-.2px]"],
  ["w-[148px] ml-[5px] pl-[8px]", <ZoomLogo key="i" />, "Zoom", "ml-[7px]"],
  ["w-[149px] pl-[10px]", <ZoomLogo key="i" />, "Zoom Meeting", "ml-[7px] tracking-[-.1px]"],
  ["w-[149px] pl-[10px]", <ZoomLogo key="i" />, "Meeting Con...", "ml-[7px]"],
];

function Taskbar() {
  return (
    <div className="flex h-[43px] shrink-0 border-x-[5px] border-b-[5px] border-[#8cc029] bg-[#8293ab] text-[13px] leading-[33px] text-[#f2f5fa]">
      <div className="relative flex w-full items-start overflow-hidden border-t border-[#3c475e]">
        <svg className="ml-[4px] shrink-0" width="42" height="42" viewBox="0 0 42 42">
          <defs><radialGradient id="start" cx=".5" cy=".85" r=".8"><stop offset="0" stopColor="#59d4f4" /><stop offset=".5" stopColor="#1d6fae" /><stop offset="1" stopColor="#3b5570" /></radialGradient></defs>
          <circle cx="21" cy="21" r="20" fill="url(#start)" stroke="#bccbdd" strokeWidth="1.400" /><path d="M3 17C6-3 36-3 39 17c-10-5-26-5-36 0z" fill="#c5d3e2" opacity=".55" />
          <path d="M12 10q4-3 8-1l-1.500 8.500q-4-2-8.500 0z" fill="#e8532e" /><path d="M22 9q5 3 10 0l-2 8.500q-5 3-10 .5z" fill="#8cc152" /><path d="M9.500 19.500q4-2 8.500 0l-2 8.500q-4-2-8 0z" fill="#4aa3e0" /><path d="M19.500 20q5 2 10 0l-2 8.500q-5 2-10 0z" fill="#fac93a" />
        </svg>
        <div className="ml-[30px] mt-[3px] h-[31px] w-[33px] shrink-0 rounded-[2px] bg-linear-to-b from-[#a0b520] to-[#4e6a0c] text-center text-[17px] font-semibold leading-[29px] tracking-[-.5px] text-white">Dw</div>
        {TASKS.map(([cls, icon, label, pad], i) => (
          <div key={i} className={"flex h-full shrink-0 items-start overflow-hidden whitespace-nowrap border-x border-x-[#56657f] border-t border-t-[#d4d8df] bg-linear-[160deg] from-[#c0c4cc] from-0% via-[#9aa5b7] via-45% to-[#8b9cb4] to-50% " + cls}>
            <div className="mt-[3px] shrink-0">{icon}</div>
            <div className={"mt-[3px] shrink-0 " + pad}>{label}</div>
          </div>
        ))}
        <div className="ml-[3px] flex h-full w-[149px] shrink-0 items-start gap-[5px] overflow-hidden whitespace-nowrap border border-b-0 border-[#39445c] bg-linear-[165deg] from-[#e4e9f2] from-15% via-[#c6cfde] via-50% to-[#bcc8da] pl-[9px] pt-[3px]"><WordDoc /><span className="text-white">final_edit - M...</span></div>
        <svg className="ml-[9px] mt-[20px] shrink-0" width="10" height="5"><path d="M0 5h10L5 0z" fill="#fff" /></svg>
        <svg className="ml-[13px] mt-[13px] shrink-0" width="19" height="18" viewBox="0 0 19 18"><path d="M1 6h3l5-5v16l-5-5H1z" fill="#fff" stroke="#4b5a72" strokeWidth=".6" /><path d="M11 6q2 3 0 6M13.500 4q3 5 0 10M16 2.500q4 6.500 0 13" fill="none" stroke="#fff" strokeWidth="1.200" /></svg>
        <div className="ml-[18px] mt-[3px] w-[80px] shrink-0 text-center text-[12.800px] leading-[19px] tracking-[-.2px]"><div>02:41 PM</div><div>23-Mar-2022</div></div>
        <div className="absolute right-0 top-0 h-full w-[11px] border-l border-[#4e5b72] bg-linear-to-b from-[#a7afbb] via-[#5c687b] to-[#7c899d]" />
      </div>
    </div>
  );
}

/* ---------- Meeting chrome ---------- */

const Up = ({ className }) => <svg className={"shrink-0 " + className} width="10" height="6" viewBox="0 0 10 6"><path d="M1 5l4-3.800L9 5" fill="none" stroke="#b0b0b0" strokeWidth="1.800" /></svg>;

function MicOff() {
  return (
    <svg className="ml-px" width="30" height="30" viewBox="0 0 30 30">
      <rect x="9.500" y="1" width="10" height="18" rx="5" fill="#a8a8a8" /><path d="M6.500 13.500c0 10 16 10 16 0M14.500 21v5.500M10 27.500h9" fill="none" stroke="#a8a8a8" strokeWidth="1.800" />
      <path d="M2 27L28 0" stroke="#1a1a1a" strokeWidth="4" /><path d="M.800 28L28.800.500" stroke="#ff5a50" strokeWidth="1.700" />
    </svg>
  );
}
function CamOff() {
  return (
    <svg width="32" height="30" viewBox="0 0 32 30">
      <path d="M1 7.500Q1 5.500 3 5.500H18q4 0 4 4V21.500q0 2-2 2H5q-4 0-4-4zM24 11q2-5 7-5v17.500q-5 0-7-5z" fill="#a8a8a8" />
      <path d="M2 27L28 0" stroke="#1a1a1a" strokeWidth="4" /><path d="M1.500 28L30 .500" stroke="#ff5a50" strokeWidth="1.700" />
    </svg>
  );
}

const Tool = ({ className, icon, label, color = "text-[#b8b8b8]" }) => (
  <div className={"relative flex shrink-0 flex-col items-center " + className}>
    <div className="flex h-[34px] items-center justify-center">{icon}</div>
    <div className={"mt-[3px] whitespace-nowrap text-[14.200px] leading-[20px] " + color}>{label}</div>
  </div>
);

function Toolbar() {
  return (
    <div className="flex h-[115px] pt-[54px]">
      <Tool className="ml-[18px] w-[80px]" icon={<MicOff />} label="Unmute" />
      <Up className="-ml-[6px] mt-[14px]" />
      <Tool className="ml-[27px] w-[90px]" icon={<CamOff />} label={<span className="tracking-[.25px]">Start Video</span>} />
      <Up className="-ml-[4px] mt-[14px]" />
      <Tool className="ml-[528px] w-[100px]" icon={
        <svg width="31" height="23" viewBox="0 0 31 23"><g fill="#a8a8a8"><circle cx="10" cy="5.500" r="5" /><path d="M1 20c0-9.500 18-9.500 18 0q0 2.500-3 2.500H4Q1 22.500 1 20z" /><circle cx="22" cy="7.500" r="4.500" /><path d="M19 14.500c6-2 11.500 0 11.500 5.500q0 2.500-3 2.500H20q1.500-4-1-8z" /></g></svg>
      } label="Participants" />
      <div className="-ml-[29px] mt-[4px] text-[15px] leading-[20px] text-[#b8b8b8]">7</div>
      <Up className="ml-[31px] mt-[14px]" />
      <Tool className="ml-[31px] w-[60px]" icon={
        <svg width="26" height="23" viewBox="0 0 26 23"><path d="M5 0h16q5 0 5 5v8q0 5-5 5H11l-5 5v-5q-6 0-6-5V5q0-5 5-5z" fill="#a8a8a8" /></svg>
      } label="Chat" />
      <Tool className="ml-[31px] w-[100px]" color="text-[#23d959]" icon={
        <svg width="30" height="23" viewBox="0 0 30 23"><rect width="30" height="23" rx="4" fill="#23d959" /><path d="M15 18V7M10.500 10.500L15 6l4.500 4.500" fill="none" stroke="#1a1a1a" strokeWidth="2" /></svg>
      } label={<span className="tracking-[.15px]">Share Screen</span>} />
      <Tool className="ml-[22px] w-[80px]" icon={
        <svg width="26" height="26" viewBox="0 0 26 26"><circle cx="13" cy="13" r="11.800" fill="none" stroke="#a8a8a8" strokeWidth="1.700" /><circle cx="13" cy="13" r="9.300" fill="#a8a8a8" /></svg>
      } label="Record" />
      <Tool className="ml-[20px] w-[80px]" icon={
        <svg className="ml-[2px]" width="26" height="28" viewBox="0 0 26 28"><circle cx="11" cy="16" r="11" fill="#a8a8a8" /><circle cx="21" cy="5" r="6" fill="#1a1a1a" /><path d="M21 .500v8.500M16.800 4.800h8.500" stroke="#b5b5b5" strokeWidth="1.700" /><g fill="#1a1a1a"><circle cx="7.500" cy="14" r="1.500" /><circle cx="14.500" cy="14" r="1.500" /></g><path d="M6 18.500c2 3.500 8 3.500 10 0" fill="none" stroke="#1a1a1a" strokeWidth="1.800" /></svg>
      } label="Reactions" />
      <div className="ml-auto mr-[15px] mt-[11px] h-[34px] w-[77px] rounded-[9px] bg-[#b72525] text-center text-[14px] font-bold leading-[33px] tracking-[-.3px] text-white">Leave</div>
    </div>
  );
}

function TopBar() {
  return (
    <div className="relative flex h-[115px] items-start">
      <div className="ml-[10px] mt-[9px] flex h-[31px] w-[31px] items-center justify-center rounded-[7px] bg-[#232323]">
        <svg width="17" height="19" viewBox="0 0 17 19"><path d="M8.500.500l7.500 3v6c0 4.500-3 7-7.500 9C4 16.500 1 14 1 9.500v-6z" fill="#23d959" /><path d="M5 9.500l2.700 2.700L12.300 7" fill="none" stroke="#1a1a1a" strokeWidth="1.800" /></svg>
      </div>
      <div className="ml-[822px] h-[60px] w-[195px] rounded-b-[10px] bg-[#242424] pt-[20px] text-center text-[14px] font-bold leading-[20px] tracking-[.05px] text-white">Amit Bhati is talking...</div>
      <div className="absolute left-[738px] top-0 flex h-[27px] text-[14px] font-bold leading-[28px] shadow-md">
        <div className="w-[288px] rounded-bl-[4px] bg-[#23d959] text-center tracking-[.03px] text-[#363a3c]">You are viewing Amit Bhati's screen</div>
        <div className="flex w-[152px] items-center rounded-br-[4px] bg-[#212325] pl-[35px] pt-px text-[13.500px] text-white">View Options<svg className="ml-[7px]" width="9" height="6" viewBox="0 0 9 6"><path d="M1 1l3.500 3.500L8 1" fill="none" stroke="#e8e8e8" strokeWidth="1.600" /></svg></div>
      </div>
      <div className="ml-auto mr-[10px] mt-[7px] flex h-[32px] w-[69px] items-center rounded-[8px] bg-[#232323] pl-[9px] text-[14.500px] leading-[20px] text-[#e6e6e6]">
        <svg className="mr-[5px]" width="13" height="13" viewBox="0 0 13 13">{[0, 1, 2].map((r) => [0, 1, 2].map((c) => <rect key={r + "-" + c} x={c * 4.700} y={r * 4.700} width="3.500" height="3.500" fill="#dedede" />))}</svg>View
      </div>
    </div>
  );
}

function ParticipantTile() {
  return (
    <div className="ml-[18px] mt-[324px] flex h-[202px] w-[360px] flex-col bg-[#222222]">
      <div className="mt-[81px] whitespace-nowrap text-center text-[30px] font-bold leading-[40px] tracking-[.55px] text-white">2019297_OMPR...</div>
      <div className="ml-px mt-auto flex h-[24px] w-[254px] items-center whitespace-nowrap bg-[#2b2b2b] pl-[4px] text-[15.500px] leading-[22px] tracking-[.02px] text-white">
        <svg className="mr-[7px] shrink-0" width="16" height="17" viewBox="0 0 16 17"><rect x="5" y="1" width="6" height="10" rx="3" fill="#ff5a5a" /><path d="M3 8c0 6 10 6 10 0M8 12v3.500M5 15.800h6" fill="none" stroke="#ff5a5a" strokeWidth="1.500" /><path d="M1 15L15 0" stroke="#2b2b2b" strokeWidth="3.500" /><path d="M.500 16L15.500.500" stroke="#ff5a5a" strokeWidth="1.400" /></svg>2019297_OMPRAKASH KUMAR
      </div>
    </div>
  );
}

export default function App() {
  return (
    <div className="h-[1080px] w-[1920px] overflow-hidden bg-[#1a1a1a] font-['Open_Sans','Noto_Sans',sans-serif]">
      <TopBar />
      <div className="flex h-[850px]">
        <div className="relative ml-[8px] flex h-[849px] w-[1511px] shrink-0 flex-col overflow-hidden bg-[#9bb9e2]">
          <OfficeOrb />
          <TitleBar />
          <Tabs />
          <Ribbon />
          <Ruler />
          <DocumentArea />
          <StatusBar />
          <Taskbar />
        </div>
        <div className="ml-[5px] mt-[409px] flex h-[32px] w-[5px] justify-between"><div className="w-[1.500px] bg-[#8a8a8a]" /><div className="w-[1.500px] bg-[#8a8a8a]" /></div>
        <ParticipantTile />
      </div>
      <Toolbar />
    </div>
  );
}
